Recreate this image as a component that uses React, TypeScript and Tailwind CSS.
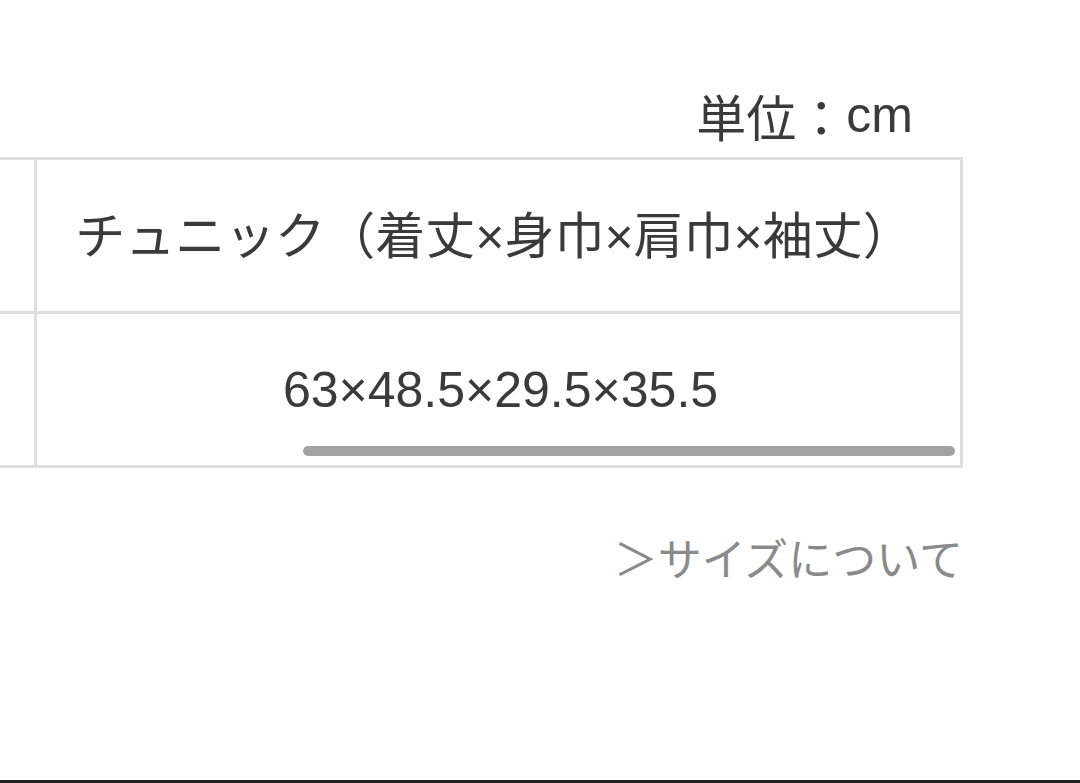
export default function App() {
  const jp = { fontFamily: '"Noto Sans CJK JP", "Liberation Sans", sans-serif' };
  const num = { fontFamily: '"Liberation Sans", "Noto Sans CJK JP", sans-serif' };

  return (
    <div className="flex h-[783px] w-[1080px] flex-col overflow-hidden bg-white text-[#3a3a3a]">
      <div className="w-[963px] pt-[84px]">
        <div className="flex justify-end pr-[50px] text-[50px] leading-[62px]" style={jp}>
          単位：<span style={num}>cm</span>
        </div>

        {/* scrolled table: left edge is off-screen */}
        <div className="relative mt-[11px] border-y-[3px] border-r-[3px] border-[#dedede]">
          <div className="flex h-[154px] border-b-[3px] border-[#dedede]">
            <div className="w-[37px] shrink-0 border-r-[3px] border-[#dedede]" />
            <div className="flex flex-1 items-center justify-center pt-[4px] pr-[9px] text-[50px]" style={num}>
              チュニック（着丈×身巾×肩巾×袖丈）
            </div>
          </div>
          <div className="flex h-[151px]">
            <div className="w-[37px] shrink-0 border-r-[3px] border-[#dedede]" />
            <div className="flex flex-1 items-center justify-center pt-[2px] pl-[4px] text-[50px]" style={num}>
              63×48.5×29.5×35.5
            </div>
          </div>
          <div className="absolute bottom-[9px] left-[303px] right-[5px] h-[10px] rounded-full bg-[#a2a2a2]" />
        </div>

        <div className="mt-[64px] flex justify-end text-[44px] leading-[50px] text-[#8a8a8a]" style={jp}>
          ＞サイズについて
        </div>
      </div>

      <div className="mt-auto h-[3px] w-full bg-[#222]" />
    </div>
  );
}
